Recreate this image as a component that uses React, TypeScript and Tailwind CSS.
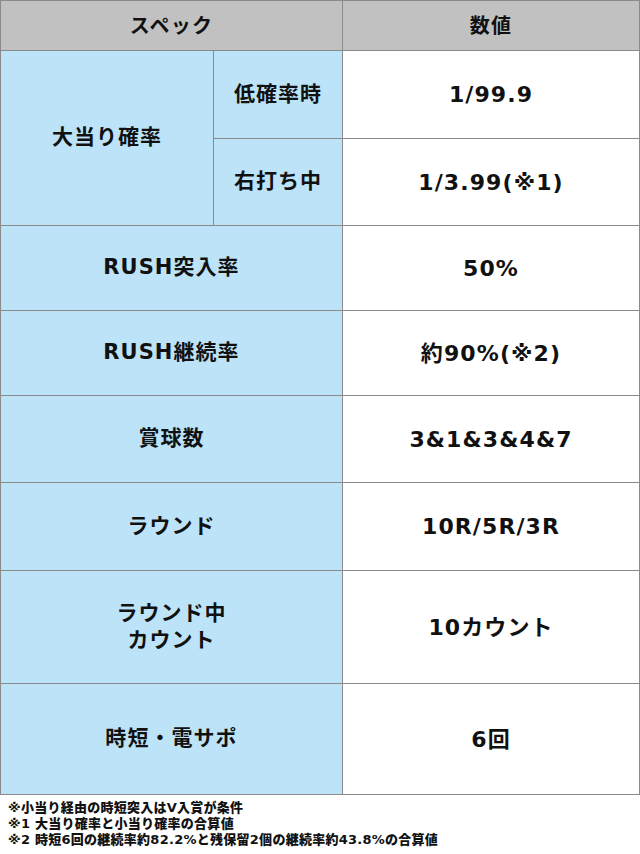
const cell = "flex items-center justify-center border-r border-b border-[#8a8a8a] text-center";
const head = `${cell} bg-[#c1c1c1] text-[20px] tracking-[0.06em]`;
const label = `${cell} bg-[#bce3f8] text-[21px] tracking-[0.05em]`;
const value = `${cell} bg-white text-[22px] tracking-[0.05em]`;

export default function App() {
  return (
    <div className="w-[640px] bg-white font-['DejaVu_Sans','Noto_Sans_CJK_JP',sans-serif] font-bold text-[#111]">
      <div className="grid grid-cols-[213px_129px_297px] grid-rows-[50px_88px_87px_85px_85px_87px_88px_113px_111px] border-l border-t border-[#8a8a8a]">
        <div className={`${head} col-span-2`}>スペック</div>
        <div className={head}>数値</div>

        <div className={`${label} row-span-2`}>大当り確率</div>
        <div className={label}>低確率時</div>
        <div className={value}>1/99.9</div>
        <div className={label}>右打ち中</div>
        <div className={value}>1/3.99(※1)</div>

        <div className={`${label} col-span-2`}>RUSH突入率</div>
        <div className={value}>50%</div>

        <div className={`${label} col-span-2`}>RUSH継続率</div>
        <div className={value}>約90%(※2)</div>

        <div className={`${label} col-span-2`}>賞球数</div>
        <div className={value}>3&amp;1&amp;3&amp;4&amp;7</div>

        <div className={`${label} col-span-2`}>ラウンド</div>
        <div className={value}>10R/5R/3R</div>

        <div className={`${label} col-span-2 leading-[27px]`}>
          ラウンド中
          <br />
          カウント
        </div>
        <div className={value}>10カウント</div>

        <div className={`${label} col-span-2`}>時短・電サポ</div>
        <div className={value}>6回</div>
      </div>

      <div className="px-2 pt-[5px] text-[13px] font-black leading-[16px] tracking-[0.02em]">
        <p>※小当り経由の時短突入はV入賞が条件</p>
        <p>※1 大当り確率と小当り確率の合算値</p>
        <p>※2 時短6回の継続率約82.2%と残保留2個の継続率約43.8%の合算値</p>
      </div>
    </div>
  );
}
